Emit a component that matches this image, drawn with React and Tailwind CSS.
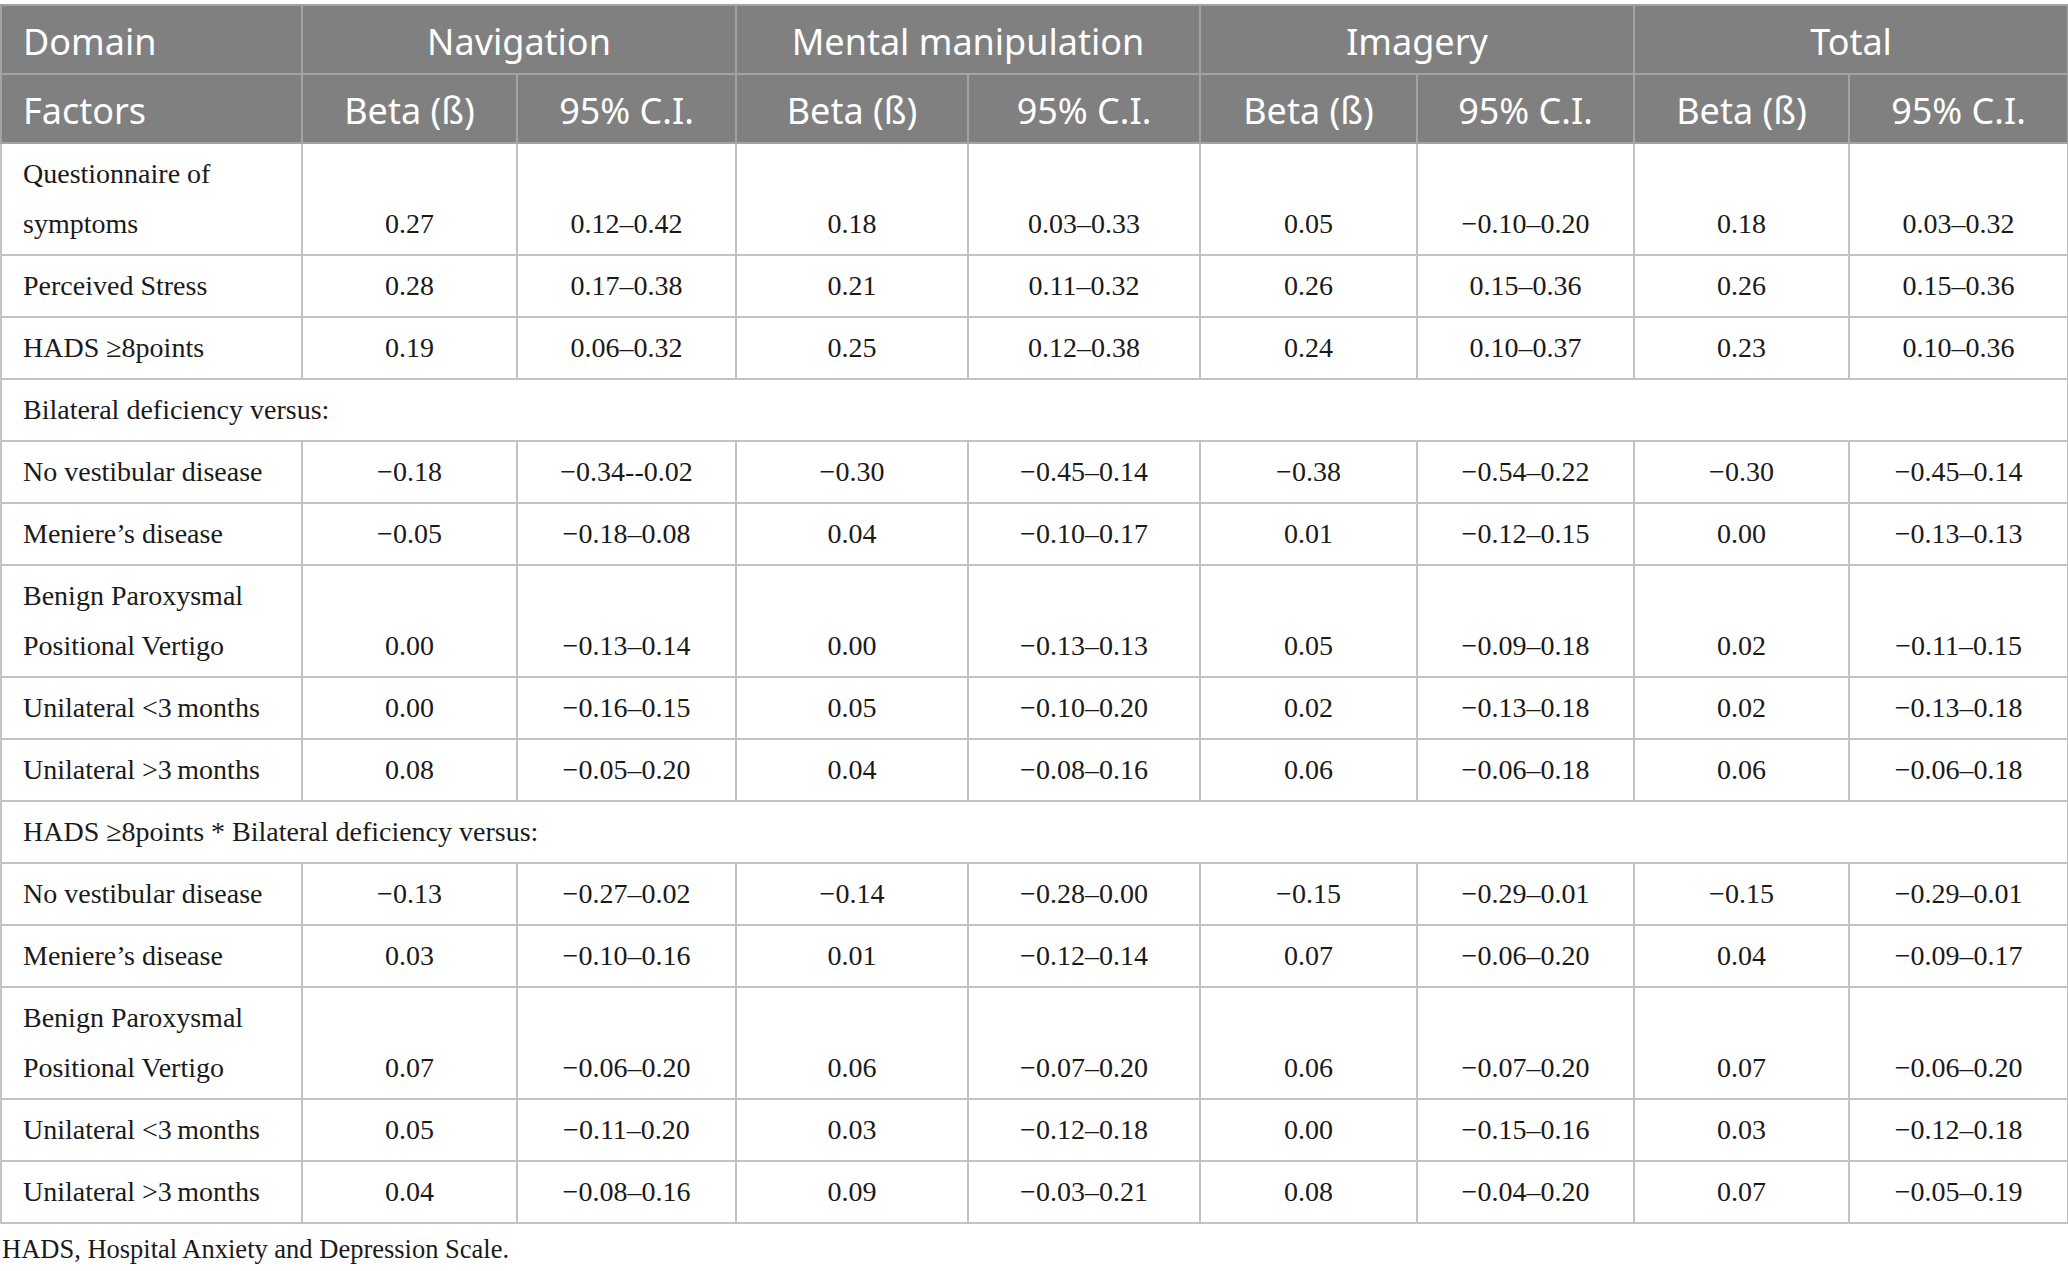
import React from 'react';

const colWidths = [301, 215, 219, 232, 232, 217, 217, 215, 219];

const groups = ['Navigation', 'Mental manipulation', 'Imagery', 'Total'];

const rows = [
  { label: ['Questionnaire of', 'symptoms'], values: ['0.27', '0.12–0.42', '0.18', '0.03–0.33', '0.05', '−0.10–0.20', '0.18', '0.03–0.32'] },
  { label: ['Perceived Stress'], values: ['0.28', '0.17–0.38', '0.21', '0.11–0.32', '0.26', '0.15–0.36', '0.26', '0.15–0.36'] },
  { label: ['HADS ≥8points'], values: ['0.19', '0.06–0.32', '0.25', '0.12–0.38', '0.24', '0.10–0.37', '0.23', '0.10–0.36'] },
  { section: 'Bilateral deficiency versus:' },
  { label: ['No vestibular disease'], values: ['−0.18', '−0.34--0.02', '−0.30', '−0.45–0.14', '−0.38', '−0.54–0.22', '−0.30', '−0.45–0.14'] },
  { label: ['Meniere’s disease'], values: ['−0.05', '−0.18–0.08', '0.04', '−0.10–0.17', '0.01', '−0.12–0.15', '0.00', '−0.13–0.13'] },
  { label: ['Benign Paroxysmal', 'Positional Vertigo'], values: ['0.00', '−0.13–0.14', '0.00', '−0.13–0.13', '0.05', '−0.09–0.18', '0.02', '−0.11–0.15'] },
  { label: ['Unilateral <3\u2009months'], values: ['0.00', '−0.16–0.15', '0.05', '−0.10–0.20', '0.02', '−0.13–0.18', '0.02', '−0.13–0.18'] },
  { label: ['Unilateral >3\u2009months'], values: ['0.08', '−0.05–0.20', '0.04', '−0.08–0.16', '0.06', '−0.06–0.18', '0.06', '−0.06–0.18'] },
  { section: 'HADS ≥8points * Bilateral deficiency versus:' },
  { label: ['No vestibular disease'], values: ['−0.13', '−0.27–0.02', '−0.14', '−0.28–0.00', '−0.15', '−0.29–0.01', '−0.15', '−0.29–0.01'] },
  { label: ['Meniere’s disease'], values: ['0.03', '−0.10–0.16', '0.01', '−0.12–0.14', '0.07', '−0.06–0.20', '0.04', '−0.09–0.17'] },
  { label: ['Benign Paroxysmal', 'Positional Vertigo'], values: ['0.07', '−0.06–0.20', '0.06', '−0.07–0.20', '0.06', '−0.07–0.20', '0.07', '−0.06–0.20'] },
  { label: ['Unilateral <3\u2009months'], values: ['0.05', '−0.11–0.20', '0.03', '−0.12–0.18', '0.00', '−0.15–0.16', '0.03', '−0.12–0.18'] },
  { label: ['Unilateral >3\u2009months'], values: ['0.04', '−0.08–0.16', '0.09', '−0.03–0.21', '0.08', '−0.04–0.20', '0.07', '−0.05–0.19'] },
];

const headCell = 'border-2 border-[#a3a3a3] h-[69px] pt-[5px] align-middle font-normal';
const bodyCell = 'border-2 border-[#c2c2c2] py-[5px] leading-[50px] align-bottom';

const App = () => {
  return (
    <div className="w-[2068px] min-h-[1271px] bg-white pt-[4px]">
      <table className="w-full table-fixed border-collapse">
        <colgroup>
          {colWidths.map((w, i) => (
            <col key={i} style={{ width: `${w}px` }} />
          ))}
        </colgroup>
        <thead className="bg-[#808080] text-white font-['Noto_Sans',sans-serif] text-[36px]">
          <tr>
            <th className={`${headCell} text-left pl-[21px]`}>Domain</th>
            {groups.map(g => (
              <th key={g} colSpan={2} className={`${headCell} text-center`}>{g}</th>
            ))}
          </tr>
          <tr>
            <th className={`${headCell} text-left pl-[21px]`}>Factors</th>
            {groups.map(g => (
              <React.Fragment key={g}>
                <th className={`${headCell} text-center`}>Beta (ß)</th>
                <th className={`${headCell} text-center`}>95% C.I.</th>
              </React.Fragment>
            ))}
          </tr>
        </thead>
        <tbody className="text-[#1a1a1a] font-['Liberation_Serif',serif] text-[28px]">
          {rows.map((row, i) =>
            row.section ? (
              <tr key={i}>
                <td colSpan={9} className={`${bodyCell} text-left pl-[21px]`}>{row.section}</td>
              </tr>
            ) : (
              <tr key={i}>
                <td className={`${bodyCell} text-left pl-[21px]`}>
                  {row.label.map((l, j) => (
                    <div key={j}>{l}</div>
                  ))}
                </td>
                {row.values.map((v, j) => (
                  <td key={j} className={`${bodyCell} text-center`}>{v}</td>
                ))}
              </tr>
            )
          )}
        </tbody>
      </table>
      <p className="mt-[7px] pl-[2px] leading-[36px] text-[26.5px] text-[#1a1a1a] font-['Liberation_Serif',serif]">
        HADS, Hospital Anxiety and Depression Scale.
      </p>
    </div>
  );
};

export default App;
